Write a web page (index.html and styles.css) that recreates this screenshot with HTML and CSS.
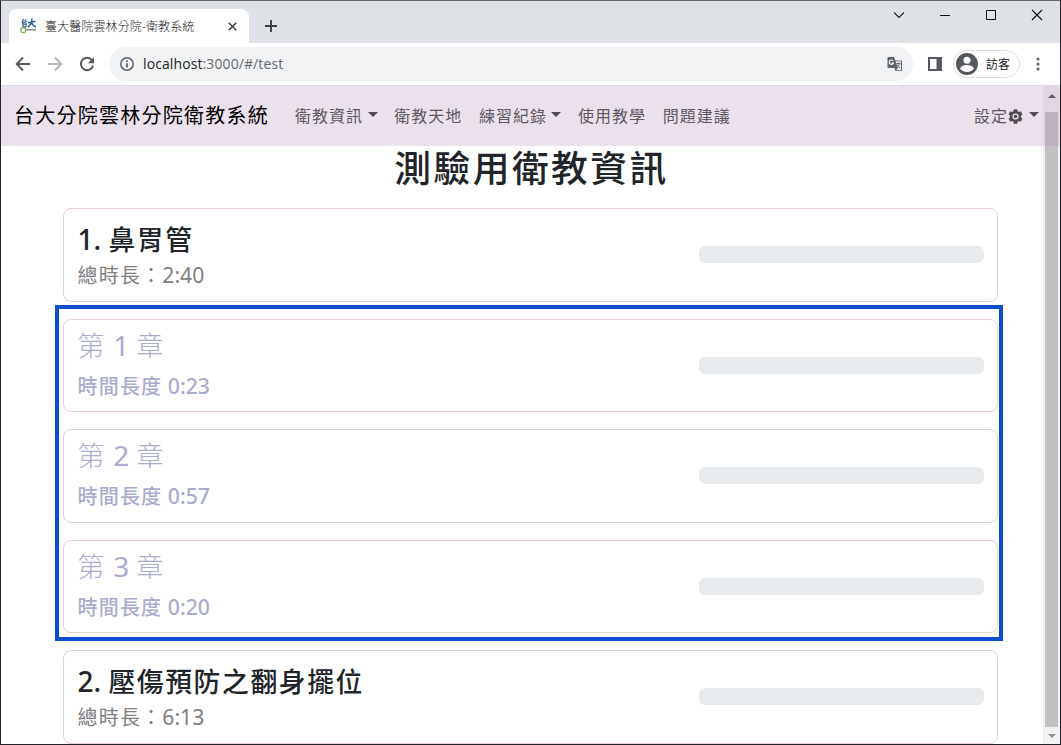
FILE: index.html
```html
<!DOCTYPE html>
<html lang="zh-Hant">
<head>
<meta charset="utf-8">
<title>臺大醫院雲林分院-衛教系統</title>
<link rel="stylesheet" href="styles.css">
</head>
<body>
<div class="window">
  <div class="tabstrip">
    <div class="tab">
      <svg class="favicon" width="17" height="16" viewBox="0 0 17 16" fill="none">
        <path d="M3.500 1 2 4M4.500 2.500l2-.8M2 4.500l5-.8M3 4.500v4.500M3 6.500l3-.6v3.300M3 9h3" stroke="#35699a" stroke-width="1.300"/>
        <path d="M8 4.800l7.500-1.500M12 .5c-.2 4-1.300 6.500-4 8.500M11.500 4.500c1 2.500 2.500 4 4.500 4.500" stroke="#2b6499" stroke-width="1.600"/>
        <circle cx="3.200" cy="12.200" r="2.500" stroke="#76b955" stroke-width="1.300"/>
        <path d="M6 11.800h10" stroke="#71866e" stroke-width="1.400"/>
      </svg>
      <span class="tab-title">臺大醫院雲林分院-衛教系統</span>
      <svg class="tab-close" width="9" height="9" viewBox="0 0 9 9"><path d="M.7.7l7.600 7.600M8.300.7.7 8.300" stroke="#3c4043" stroke-width="1.500"/></svg>
    </div>
    <svg class="new-tab" width="12" height="12" viewBox="0 0 12 12"><path d="M6 0v12M0 6h12" stroke="#3c4043" stroke-width="1.900"/></svg>
    <div class="controls">
      <svg width="12" height="12" viewBox="0 0 12 12" fill="none"><path d="M1 3.500 6 8.500 11 3.500" stroke="#222" stroke-width="1.100"/></svg>
      <svg width="12" height="12" viewBox="0 0 12 12"><path d="M1 6.500h10" stroke="#111"/></svg>
      <svg width="12" height="12" viewBox="0 0 12 12" fill="none"><path d="M1.500 1.500h9v9h-9z" stroke="#111"/></svg>
      <svg width="12" height="12" viewBox="0 0 12 12"><path d="M1 1l10 10M11 1 1 11" stroke="#111" stroke-width="1.100"/></svg>
    </div>
  </div>
  <div class="toolbar">
    <svg class="nav-icon" width="16" height="16" viewBox="0 0 16 16" fill="none" stroke="#55595d" stroke-width="1.900"><path d="M15 8H2M8 1.500 1.700 8 8 14.500"/></svg>
    <svg class="nav-icon" width="16" height="16" viewBox="0 0 16 16" fill="none" stroke="#b5b7ba" stroke-width="1.900"><path d="M1 8h13M8 1.500 14.300 8 8 14.500"/></svg>
    <svg class="nav-icon" width="16" height="16" viewBox="0 0 16 16" fill="none"><path d="M13.300 4.500A6.200 6.200 0 1 0 14.100 9.500" stroke="#55595d" stroke-width="2"/><path d="M15 1v6.200H8.800z" fill="#55595d"/></svg>
    <div class="omnibox">
      <svg width="14" height="14" viewBox="0 0 14 14" fill="none"><circle cx="7" cy="7" r="6.200" stroke="#5f6368" stroke-width="1.500"/><path d="M7 6.200v4.300M7 3.300v1.600" stroke="#5f6368" stroke-width="1.700"/></svg>
      <span class="url">localhost<span class="path">:3000/#/test</span></span>
      <svg class="translate" width="16" height="16" viewBox="0 0 16 16" fill="none"><path d="M1.500 1H7l1.300 3.500H14a1 1 0 0 1 1 1V14a1 1 0 0 1-1 1H8.500L7.500 12h-6a1 1 0 0 1-1-1V2a1 1 0 0 1 1-1z" fill="#5f6368"/><path d="M8.600 5.300h5.300v8.900H9.300l1.400-2.100z" fill="#eef0f2"/><path d="M6.300 5A2.200 2.200 0 1 0 6.500 7H4.600" stroke="#fff" stroke-width="1.100"/><path d="M9.300 7.500h4.200M11.300 6.500v1M12.600 7.500c-.4 2-1.500 3-2.800 3.800M10.200 8.500c.5 1.500 1.600 2.600 2.900 3.300" stroke="#5f6368" stroke-width=".9"/></svg>
    </div>
    <svg class="panel" width="14" height="14" viewBox="0 0 14 14"><path d="M0 0h14v14H0zM2 2v10h6.500V2z" fill="#55595d" fill-rule="evenodd"/></svg>
    <div class="profile">
      <svg width="22" height="22" viewBox="0 0 22 22"><circle cx="11" cy="11" r="11" fill="#55585c"/><circle cx="11" cy="7.300" r="3.500" fill="#fff"/><path d="M4 15.600c1.300-2.800 4.200-3.600 7-3.600s5.700.8 7 3.600c-1.500 2.200-4.200 3.500-7 3.500s-5.500-1.300-7-3.500z" fill="#fff"/></svg>
      <span>訪客</span>
    </div>
    <svg class="menu" width="4" height="14" viewBox="0 0 4 14" fill="#5f6368"><circle cx="2" cy="2" r="1.600"/><circle cx="2" cy="7" r="1.600"/><circle cx="2" cy="12" r="1.600"/></svg>
  </div>
  <div class="viewport">
    <div class="page">
      <nav class="navbar">
        <span class="brand">台大分院雲林分院衛教系統</span>
        <span class="link">衛教資訊<i class="caret"></i></span>
        <span class="link">衛教天地</span>
        <span class="link">練習紀錄<i class="caret"></i></span>
        <span class="link">使用教學</span>
        <span class="link">問題建議</span>
        <span class="link settings">設定<svg class="gear" width="15" height="15" viewBox="0 0 16 16"><path fill="#514c52" fill-rule="evenodd" d="M6.200.3h3.600l.5 2 1.300.8 2-.6 1.800 3.100-1.500 1.600v1.600l1.500 1.600-1.800 3.100-2-.6-1.300.8-.5 2H6.200l-.5-2-1.300-.8-2 .6L.6 10.400l1.500-1.600V7.200L.6 5.600l1.800-3.100 2 .6 1.300-.8zM8 4.700a3.300 3.300 0 1 0 0 6.600 3.300 3.300 0 0 0 0-6.600zm0 1.400a1.900 1.900 0 1 1 0 3.800 1.900 1.900 0 0 1 0-3.800z"/></svg><i class="caret"></i></span>
      </nav>
      <h1 class="title">測驗用衛教資訊</h1>
      <div class="cards">
        <section class="card topic"><div><h2><span class="num">1. </span>鼻胃管</h2><p>總時長：<span class="num">2:40</span></p></div><div class="progress"></div></section>
        <div class="chapters">
          <section class="card chapter"><div><h3>第<span class="num"> 1 </span>章</h3><p>時間長度<span class="num"> 0:23</span></p></div><div class="progress"></div></section>
          <section class="card chapter"><div><h3>第<span class="num"> 2 </span>章</h3><p>時間長度<span class="num"> 0:57</span></p></div><div class="progress"></div></section>
          <section class="card chapter"><div><h3>第<span class="num"> 3 </span>章</h3><p>時間長度<span class="num"> 0:20</span></p></div><div class="progress"></div></section>
          <div class="highlight"></div>
        </div>
        <section class="card topic"><div><h2><span class="num">2. </span>壓傷預防之翻身擺位</h2><p>總時長：<span class="num">6:13</span></p></div><div class="progress"></div></section>
      </div>
    </div>
    <div class="scrollbar"><i class="up"></i><div class="thumb"></div><i class="down"></i><div class="tint"></div></div>
  </div>
</div>
</body>
</html>
```
FILE: styles.css
```css
* { box-sizing: border-box; }
body { margin: 0; overflow: hidden; font-family: "Noto Sans", "Noto Sans CJK TC", sans-serif; color: #212529; }
svg { display: block; flex: none; }
h1, h2, h3, p { margin: 0; white-space: pre; }
.window { width: 1061px; height: 745px; border: 1px solid #25232a; border-top-color: #67676c; display: flex; flex-direction: column; background: #fff; overflow: hidden; }

.tabstrip { height: 42px; flex: none; background: #dee1e6; display: flex; padding: 8px 17px 0 8px; }
.tab { width: 240px; height: 34px; background: #fff; border-radius: 8px 8px 0 0; display: flex; align-items: center; padding: 0 12px 0 11px; }
.tab-title { font-size: 12px; font-weight: 300; color: #222; margin-left: 8px; letter-spacing: .12px; white-space: nowrap; }
.tab-close { margin-left: auto; }
.new-tab { margin: 11px 0 0 16px; }
.controls { margin-left: auto; display: flex; gap: 34px; }

.toolbar { height: 43px; flex: none; display: flex; align-items: center; border-bottom: 1px solid #d9d8dc; padding: 0 20px 1px 14px; }
.nav-icon { margin-right: 16px; }
.omnibox { width: 804px; height: 34px; border-radius: 17px; background: #f1f3f4; display: flex; align-items: center; padding: 0 10px 0 11px; margin-left: -2px; }
.url { font-family: "Open Sans", sans-serif; font-size: 14px; margin-left: 9px; color: #222; letter-spacing: .1px; }
.path { color: #666a6e; }
.translate { margin-left: auto; }
.panel { margin-left: 15px; }
.profile { width: 67px; height: 28px; border: 1px solid #dadce0; border-radius: 14px; margin-left: 11px; display: flex; align-items: center; padding-left: 2px; font-size: 12px; gap: 8px; white-space: nowrap; }
.menu { margin-left: auto; }

.viewport { flex: 1; min-height: 0; display: flex; }
.page { width: 1042px; flex: none; overflow: hidden; }
.navbar { height: 60px; background: #ebe1ec; display: flex; align-items: center; padding: 0 0 3px 13px; white-space: nowrap; }
.brand { font-size: 20px; letter-spacing: 1.25px; color: #000; margin-right: 26px; }
.link { font-size: 16px; letter-spacing: 1px; color: #5e5860; display: flex; align-items: center; margin-right: 16.7px; }
.caret { border: 5px solid transparent; border-top-color: #514c52; border-bottom: 0; margin-left: 4.500px; }
.gear { margin-top: 4px; }
.settings { margin-left: auto; margin-right: 4px; }
.settings .caret { margin-left: 6px; }
.title { font-size: 36.8px; letter-spacing: 2.4px; font-weight: 500; line-height: 46px; height: 46px; position: relative; top: -1px; text-align: center; padding-left: 19px; }
.cards { padding: 16px 45px 0 62px; display: flex; flex-direction: column; gap: 17px; }
.chapters { position: relative; display: flex; flex-direction: column; gap: 17px; }
.highlight { position: absolute; inset: -14px -5px -8px -8px; border: 4px solid #0b4fd0; }
.card { height: 93.5px; border: 1px solid #e5ced8; border-radius: 8px; padding: 0 13px 0 13.5px; display: flex; align-items: center; justify-content: space-between; }
.progress { width: 285px; height: 17px; border-radius: 6px; background: #e8ebee; }
.topic h2 { font-size: 26.8px; letter-spacing: 1.6px; font-weight: 500; line-height: 34px; padding-top: 8px; }
.topic p { font-size: 20px; letter-spacing: 1.2px; line-height: 38px; color: #808080; }
.chapter h3 { font-size: 26.8px; letter-spacing: 1.6px; font-weight: 300; line-height: 40px; padding-top: 3px; color: #aaaccf; }
.chapter p { font-size: 20px; letter-spacing: 1.2px; font-weight: 500; line-height: 42px; color: #aaaccf; }
.num { letter-spacing: 0; line-height: 1; }
h2 .num, h3 .num { font-size: 28px; }
h3 .num { font-weight: 400; }
p .num { font-size: 21.2px; }
.chapter p .num { font-weight: 500; }

.scrollbar { position: relative; width: 17px; padding: 0 2px 0 2px; background: #f1f1f1; display: flex; flex-direction: column; align-items: center; flex: none; }
.thumb { width: 13px; height: 615px; background: #c1c1c1; }
.up { border: 4px solid transparent; border-top: 0; border-bottom-color: #505050; margin: 8px 0 14px; }
.down { border: 4px solid transparent; border-bottom: 0; border-top-color: #909090; margin-top: 7px; }
.tint { position: absolute; inset: 0 0 auto; height: 60px; background: rgba(178, 126, 188, .23); }
```
